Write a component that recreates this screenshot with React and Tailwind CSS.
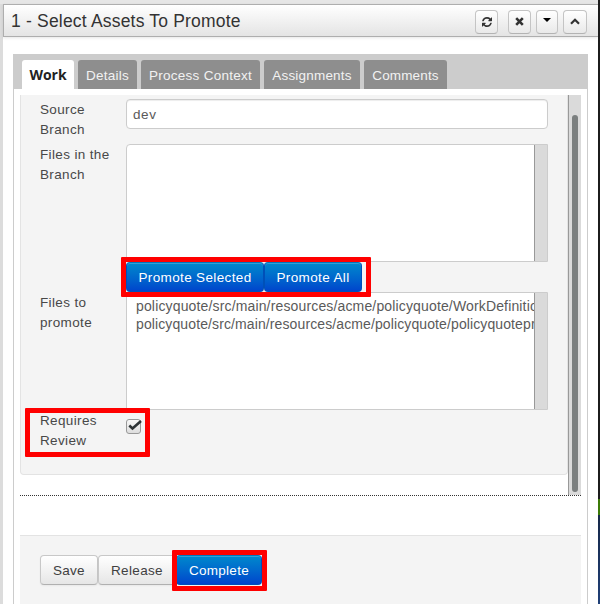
const LABEL = 'w-[86px] shrink-0 pt-px text-[13.5px] leading-5 tracking-[0.36px] text-[#484848]';
const BLUE =
  'h-[30px] rounded-[4px] border border-[#0050b8] border-t-[#0077bd] bg-linear-to-b from-[#0088cc] to-[#0044cc] pt-[3px] text-[13.5px] whitespace-nowrap text-white shadow-[inset_0_1px_0_rgba(255,255,255,0.2)]';
const GREY =
  'h-[30px] rounded-[4px] border border-[#c8c8c8] border-b-[#b0b0b0] bg-linear-to-b from-white to-[#e6e6e6] pt-[3px] text-[13.5px] whitespace-nowrap text-[#404040] shadow-[0_1px_2px_rgba(0,0,0,0.05)]';
const TOOL =
  'flex h-6 items-center justify-center rounded-[4px] border border-[#c4c4c4] border-b-[#b3b3b3] bg-linear-to-b from-white to-[#e9e9e9]';

function Tab({ label, width, spacing }) {
  return (
    <div
      className={`flex h-[29px] items-center justify-center rounded-t-[3px] bg-[#8e8e8e] pt-[3px] text-[13.5px] whitespace-nowrap text-[#f2f2f2] ${width} ${spacing}`}
    >
      {label}
    </div>
  );
}

function ListBox({ children }) {
  return (
    <div className="flex h-[118px] w-[422px] rounded-tl-[4px] border border-[#ccc] bg-white">
      <div className="flex-1 overflow-hidden pt-[4px] pl-[9px] text-[14px] leading-[18px] whitespace-nowrap text-[#5a5a5a]">
        {children}
      </div>
      <div className="w-[13px] shrink-0 border-l border-[#999] bg-[#dadada]" />
    </div>
  );
}

function Header() {
  return (
    <header className="ml-[3px] flex h-[33px] w-[595px] items-center border-t border-b border-l border-[#aeaeae] bg-linear-to-b from-white to-[#e4e4e4] pl-[7px] shadow-[0_1px_3px_rgba(0,0,0,0.1)]">
      <h1 className="w-[464px] text-[17.5px] leading-5 whitespace-nowrap text-[#333] tracking-[0.19px]">
        1 - Select Assets To Promote
      </h1>
      <div className="mt-[2px] flex">
        <div className={`${TOOL} w-[23px]`}>
          <svg width="10" height="10" viewBox="0 0 1536 1536" fill="#333">
            <path d="M1511 928q0 5-1 7-64 268-268 434.500T764 1536q-146 0-282.500-55T238 1324l-129 129q-19 19-45 19t-45-19-19-45V960q0-26 19-45t45-19h448q26 0 45 19t19 45-19 45l-137 137q71 66 161 102t187 36q134 0 250-65t186-179q11-17 53-117 8-23 30-23h192q13 0 22.500 9.500t9.500 22.500zm25-800v448q0 26-19 45t-45 19h-448q-26 0-45-19t-19-45 19-45l138-138Q969 256 768 256q-134 0-250 65T332 500q-11 17-53 117-8 23-30 23H50q-13 0-22.500-9.500T18 608v-7q65-268 270-434.500T768 0q146 0 284 55.500T1297 212l130-129q19-19 45-19t45 19 19 45z" />
          </svg>
        </div>
        <div className={`${TOOL} ml-[10px] w-[23px]`}>
          <svg width="9" height="9" viewBox="0 0 9 9" stroke="#333" strokeWidth="2.6">
            <path d="M1.2 1.2 7.8 7.8M7.800 1.2 1.2 7.8" />
          </svg>
        </div>
        <div className={`${TOOL} ml-[5px] w-[22px]`}>
          <svg className="mb-[4px]" width="8" height="4" viewBox="0 0 8 4" fill="#000">
            <path d="M0 0h8L4 4z" />
          </svg>
        </div>
        <div className={`${TOOL} ml-[5px] w-6`}>
          <svg width="10" height="7" viewBox="0 0 10 7" fill="none" stroke="#333" strokeWidth="2.2">
            <path d="M1 5.700 5 1.700 9 5.700" />
          </svg>
        </div>
      </div>
    </header>
  );
}

function TaskForm() {
  return (
    <div className="mt-[6px] ml-[6px] flex h-[401px] w-[561px] border-b border-dotted border-[#333]">
      <div className="h-[380px] w-[548px] shrink-0 rounded-b-[4px] border border-t-0 border-[#e3e3e3] bg-[#f4f4f4] pt-1 pl-[19px]">
        <div className="flex h-[45px]">
          <div className={LABEL}>
            Source
            <br />
            Branch
          </div>
          <div className="flex h-[30px] w-[422px] items-center rounded-[4px] border border-[#ccc] bg-white pt-0.5 pl-[6px] text-[13.5px] tracking-[0.6px] text-[#5a5a5a] shadow-[inset_0_1px_1px_rgba(0,0,0,0.075)]">
            dev
          </div>
        </div>
        <div className="flex h-[118px]">
          <div className={LABEL}>
            Files in the
            <br />
            Branch
          </div>
          <ListBox />
        </div>
        <div className="ml-[86px] flex h-[30px]">
          <button className={`${BLUE} w-[138px] tracking-[0.36px]`}>Promote Selected</button>
          <button className={`${BLUE} w-[98px] tracking-[0.36px]`}>Promote All</button>
        </div>
        <div className="flex h-[118px]">
          <div className={LABEL}>
            Files to
            <br />
            promote
          </div>
          <ListBox>
            <div className="tracking-[0.15px]">policyquote/src/main/resources/acme/policyquote/WorkDefinitions.wid</div>
            <div className="tracking-[0.11px]">policyquote/src/main/resources/acme/policyquote/policyquoteprocess.bpmn2</div>
          </ListBox>
        </div>
        <div className="flex">
          <div className={LABEL}>
            Requires
            <br />
            Review
          </div>
          <div className="mt-[9px] h-[15px] w-[15px] rounded-[3px] border border-[#999] bg-linear-to-b from-[#f8f8f8] to-[#ddd]">
            <svg className="overflow-visible" width="13" height="13" viewBox="0 0 13 13" fill="none" stroke="#2e3436" strokeWidth="2.6">
              <path d="M2.300 5.500 5.500 8.500 14 1" />
            </svg>
          </div>
        </div>
      </div>
      <div className="flex w-[13px] border-l border-[#999] bg-[#dadada] pt-5 pl-[3px]">
        <div className="h-[377px] w-[6px] rounded-full bg-[#7b7f7f]" />
      </div>
    </div>
  );
}

export default function App() {
  return (
    <div className="relative flex h-[604px] w-[600px] overflow-hidden bg-white font-['Liberation_Sans',Arial,sans-serif]">
      <div className="w-[598px] shrink-0">
        <div className="h-1 bg-[#e6e6e6]" />
        <div className="h-[601px] border-l-[3px] border-[#dcdcdc]">
          <div className="-ml-[3px]">
            <Header />
          </div>
          <main className="mt-[17px] ml-[10px] h-[560px] w-[575px] border-x border-[#ccc]">
            <nav className="-mx-px flex h-[35px] items-end gap-1 bg-[#ccc] pl-[9px]">
              <div className="flex h-[29px] w-[52px] items-center justify-center rounded-t-[3px] bg-white font-['Open_Sans'] text-[14px] font-bold text-[#222]">
                Work
              </div>
              <Tab label="Details" width="w-[59px]" spacing="tracking-[0.25px]" />
              <Tab label="Process Context" width="w-[119px]" spacing="tracking-[0.28px]" />
              <Tab label="Assignments" width="w-[96px]" spacing="tracking-[0.2px]" />
              <Tab label="Comments" width="w-[83px]" spacing="tracking-[0.15px]" />
            </nav>
            <TaskForm />
            <footer className="mt-[39px] ml-[6px] flex h-[80px] w-[561px] border-t border-[#e3e3e3] bg-[#f4f4f4] pt-[19px] pl-5">
              <button className={`${GREY} w-[58px] tracking-[0.25px]`}>Save</button>
              <button className={`${GREY} w-[78px] tracking-[0.35px]`}>Release</button>
              <button className={`${BLUE} w-[86px] tracking-[0.25px]`}>Complete</button>
            </footer>
          </main>
        </div>
      </div>
      <div className="w-[2px] shrink-0 bg-[#1c1c1c]">
        <div className="h-[499px]" />
        <div className="h-4 bg-[#3c7a08]" />
        <div className="h-[89px] bg-linear-to-b from-[#162848] to-[#204078]" />
      </div>
      <div className="absolute top-[257px] left-[121px] h-[40px] w-[250px] rounded-[1px] border-[5px] border-[#f00]" />
      <div className="absolute top-[408px] left-[25px] h-[49px] w-[125px] rounded-[1px] border-[5px] border-[#f00]" />
      <div className="absolute top-[550px] left-[172px] h-[41px] w-[95px] rounded-[1px] border-[5px] border-[#f00]" />
    </div>
  );
}
